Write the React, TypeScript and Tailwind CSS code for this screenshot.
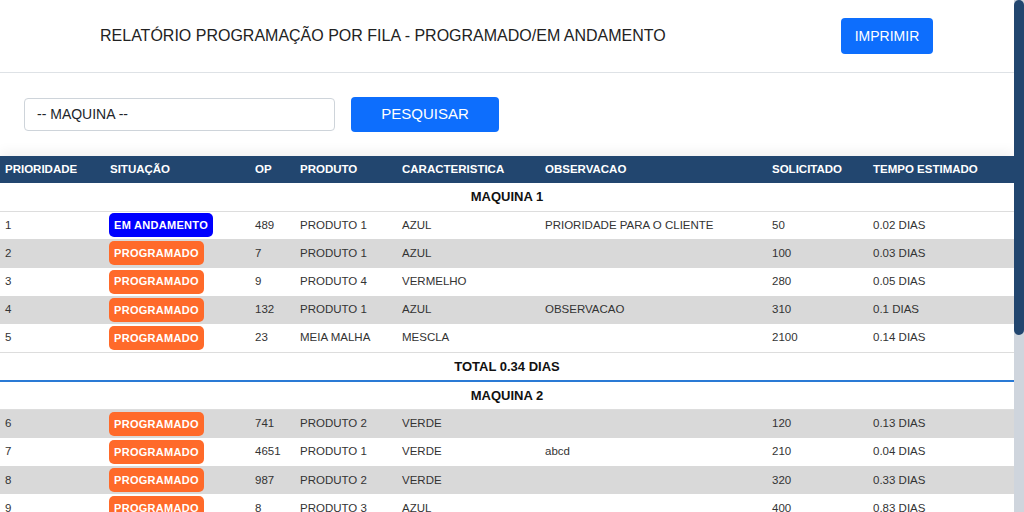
import React from "react";

type Situacao = "EM ANDAMENTO" | "PROGRAMADO";

interface Linha {
  prioridade: number;
  situacao: Situacao;
  op: string;
  produto: string;
  caracteristica: string;
  observacao: string;
  solicitado: string;
  tempo: string;
}

interface Maquina {
  nome: string;
  total: string;
  linhas: Linha[];
}

const maquinas: Maquina[] = [
  {
    nome: "MAQUINA 1",
    total: "TOTAL 0.34 DIAS",
    linhas: [
      { prioridade: 1, situacao: "EM ANDAMENTO", op: "489", produto: "PRODUTO 1", caracteristica: "AZUL", observacao: "PRIORIDADE PARA O CLIENTE", solicitado: "50", tempo: "0.02 DIAS" },
      { prioridade: 2, situacao: "PROGRAMADO", op: "7", produto: "PRODUTO 1", caracteristica: "AZUL", observacao: "", solicitado: "100", tempo: "0.03 DIAS" },
      { prioridade: 3, situacao: "PROGRAMADO", op: "9", produto: "PRODUTO 4", caracteristica: "VERMELHO", observacao: "", solicitado: "280", tempo: "0.05 DIAS" },
      { prioridade: 4, situacao: "PROGRAMADO", op: "132", produto: "PRODUTO 1", caracteristica: "AZUL", observacao: "OBSERVACAO", solicitado: "310", tempo: "0.1 DIAS" },
      { prioridade: 5, situacao: "PROGRAMADO", op: "23", produto: "MEIA MALHA", caracteristica: "MESCLA", observacao: "", solicitado: "2100", tempo: "0.14 DIAS" },
    ],
  },
  {
    nome: "MAQUINA 2",
    total: "TOTAL 1.33 DIAS",
    linhas: [
      { prioridade: 6, situacao: "PROGRAMADO", op: "741", produto: "PRODUTO 2", caracteristica: "VERDE", observacao: "", solicitado: "120", tempo: "0.13 DIAS" },
      { prioridade: 7, situacao: "PROGRAMADO", op: "4651", produto: "PRODUTO 1", caracteristica: "VERDE", observacao: "abcd", solicitado: "210", tempo: "0.04 DIAS" },
      { prioridade: 8, situacao: "PROGRAMADO", op: "987", produto: "PRODUTO 2", caracteristica: "VERDE", observacao: "", solicitado: "320", tempo: "0.33 DIAS" },
      { prioridade: 9, situacao: "PROGRAMADO", op: "8", produto: "PRODUTO 3", caracteristica: "AZUL", observacao: "", solicitado: "400", tempo: "0.83 DIAS" },
    ],
  },
];

const colunas = [
  { label: "PRIORIDADE", w: "w-[105px]" },
  { label: "SITUAÇÃO", w: "w-[145px]" },
  { label: "OP", w: "w-[45px]" },
  { label: "PRODUTO", w: "w-[102px]" },
  { label: "CARACTERISTICA", w: "w-[143px]" },
  { label: "OBSERVACAO", w: "w-[227px]" },
  { label: "SOLICITADO", w: "w-[101px]" },
  { label: "TEMPO ESTIMADO", w: "" },
];

const Badge: React.FC<{ situacao: Situacao }> = ({ situacao }) => (
  <span
    className={`inline-flex h-[24px] items-center rounded-[5px] px-[5px] text-[11px] font-bold tracking-[0.3px] text-white ${
      situacao === "EM ANDAMENTO" ? "bg-[#0000ff]" : "bg-[#ff6a2a]"
    }`}
  >
    {situacao}
  </span>
);

export default function App() {
  let idx = 0;
  return (
    <div
      className="flex h-screen overflow-hidden bg-white text-[#333]"
      style={{ fontFamily: '"Liberation Sans", Arial, sans-serif' }}
    >
      <div className="min-w-0 flex-1">
        {/* Cabeçalho */}
        <div className="flex h-[73px] items-center border-b border-[#dee2e6] pl-[100px] pr-[81px]">
          <h1 className="text-[16px] font-normal text-[#222]">
            RELATÓRIO PROGRAMAÇÃO POR FILA - PROGRAMADO/EM ANDAMENTO
          </h1>
          <button className="ml-auto h-[36px] w-[92px] rounded-[4px] bg-[#0d6efd] text-[14px] text-white">
            IMPRIMIR
          </button>
        </div>

        {/* Filtro */}
        <div className="flex items-center gap-[16px] px-[24px] pt-[24px] pb-[24px]">
          <div className="flex h-[33px] w-[311px] items-center rounded-[4px] border border-[#ced4da] px-[12px] text-[14px] text-[#212529]">
            -- MAQUINA --
          </div>
          <button className="h-[35px] w-[148px] rounded-[4px] bg-[#0d6efd] text-[15px] text-white">
            PESQUISAR
          </button>
        </div>

        {/* Tabela */}
        <div className="shadow-[0_-4px_12px_rgba(0,0,0,0.06)]">
          <table className="w-full border-collapse text-[11.5px]">
            <thead>
              <tr className="h-[27px] bg-[#22466f] text-left text-white">
                {colunas.map((c) => (
                  <th key={c.label} className={`${c.w} px-[5px] font-bold`}>
                    {c.label}
                  </th>
                ))}
              </tr>
            </thead>
            <tbody>
              {maquinas.map((m) => (
                <React.Fragment key={m.nome}>
                  <tr className="h-[28px] border-b border-[#dddddd]">
                    <td colSpan={8} className="text-center text-[13px] font-bold text-[#111]">
                      {m.nome}
                    </td>
                  </tr>
                  {m.linhas.map((l) => {
                    const cinza = idx++ % 2 === 1;
                    return (
                      <tr key={l.prioridade} className={`h-[28.3px] ${cinza ? "bg-[#d9d9d9]" : "bg-white"}`}>
                        <td className="px-[5px]">{l.prioridade}</td>
                        <td className="px-[4px]">
                          <Badge situacao={l.situacao} />
                        </td>
                        <td className="px-[5px]">{l.op}</td>
                        <td className="px-[5px]">{l.produto}</td>
                        <td className="px-[5px]">{l.caracteristica}</td>
                        <td className="px-[5px]">{l.observacao}</td>
                        <td className="px-[5px]">{l.solicitado}</td>
                        <td className="px-[5px]">{l.tempo}</td>
                      </tr>
                    );
                  })}
                  <tr className="h-[29px] border-t border-b-2 border-t-[#dddddd] border-b-[#2a7ad5]">
                    <td colSpan={8} className="text-center text-[13px] font-bold text-[#111]">
                      {m.total}
                    </td>
                  </tr>
                </React.Fragment>
              ))}
            </tbody>
          </table>
        </div>
      </div>

      {/* Barra de rolagem */}
      <div className="flex w-[10px] shrink-0 flex-col bg-[#cfd5dd]">
        <div className="h-[335px] rounded-[5px] bg-[#22466f]" />
      </div>
    </div>
  );
}
